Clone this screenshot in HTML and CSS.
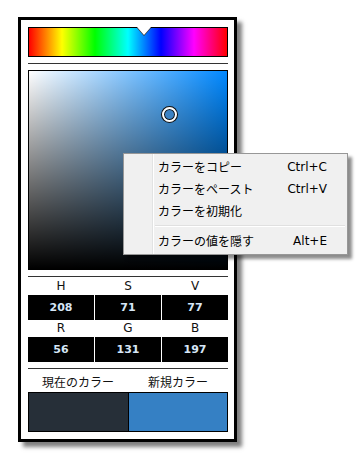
FILE: index.html
```html
<html>

<head>
    <meta charset="utf-8" />
    <link rel="stylesheet" href="styles.css">
</head>

<body>
    <div class="panel">
        <div class="hue-bar">
            <div class="hue-marker"></div>
        </div>
        <div class="divider"></div>
        <div class="sv-box">
            <div class="sv-white"></div>
            <div class="sv-black"></div>
            <div class="sv-cursor"></div>
        </div>
        <div class="divider"></div>
        <div class="values">
            <div class="label">H</div>
            <div class="label">S</div>
            <div class="label">V</div>
            <div class="value">208</div>
            <div class="value">71</div>
            <div class="value">77</div>
            <div class="label">R</div>
            <div class="label">G</div>
            <div class="label">B</div>
            <div class="value">56</div>
            <div class="value">131</div>
            <div class="value">197</div>
        </div>
        <div class="divider"></div>
        <div class="swatch-labels">
            <div class="label">現在のカラー</div>
            <div class="label">新規カラー</div>
        </div>
        <div class="swatches">
            <div class="swatch current"></div>
            <div class="swatch new"></div>
        </div>
    </div>

    <div class="menu">
        <div class="menu-item">
            <span class="menu-text">カラーをコピー</span>
            <span class="menu-key">Ctrl+C</span>
        </div>
        <div class="menu-item">
            <span class="menu-text">カラーをペースト</span>
            <span class="menu-key">Ctrl+V</span>
        </div>
        <div class="menu-item">
            <span class="menu-text">カラーを初期化</span>
            <span class="menu-key"></span>
        </div>
        <div class="menu-sep"></div>
        <div class="menu-item">
            <span class="menu-text">カラーの値を隠す</span>
            <span class="menu-key">Alt+E</span>
        </div>
    </div>
</body>

</html>
```

FILE: styles.css
```css
body {
    margin: 0;
    background: #fff;
    font-family: "Noto Sans CJK JP", "Noto Sans", sans-serif;
    font-size: 12px;
    color: #000;
}

.panel {
    width: 200px;
    margin: 17px 0 0 18px;
    padding: 7px 6px 7px 7px;
    border: 3px solid #000;
    background: #fff;
    box-shadow: 5px 5px 4px rgba(0, 0, 0, 0.5);
}

.hue-bar {
    position: relative;
    height: 28px;
    border: 1px solid #000;
    background: linear-gradient(to right, #f00, #ff0, #0f0, #0ff, #00f, #f0f, #f00);
}

.hue-marker {
    position: absolute;
    top: -1px;
    left: 108px;
    width: 0;
    height: 0;
    border-left: 7px solid transparent;
    border-right: 7px solid transparent;
    border-top: 8px solid #fff;
    filter: drop-shadow(0 1px 0 #333);
}

.divider {
    height: 1px;
    background: #333;
    margin: 6px 0;
}

.sv-box {
    position: relative;
    height: 198px;
    border: 1px solid #000;
    background: #0088ff;
}

.sv-white {
    position: absolute;
    inset: 0;
    background: linear-gradient(to right, #fff, rgba(255, 255, 255, 0));
}

.sv-black {
    position: absolute;
    inset: 0;
    background: linear-gradient(to bottom, rgba(0, 0, 0, 0), #000);
}

.sv-cursor {
    position: absolute;
    left: 133px;
    top: 36px;
    width: 11px;
    height: 11px;
    border: 2px solid #fff;
    border-radius: 50%;
    box-shadow: 0 0 0 1px #111, inset 0 0 0 1px #111;
    background: #3b82c4;
}

.values {
    display: grid;
    grid-template-columns: 66px 66px 66px;
    column-gap: 1px;
    margin-top: -5px;
}

.label {
    height: 17px;
    line-height: 17px;
    text-align: center;
    color: #111;
    font-family: "DejaVu Sans", "Noto Sans CJK JP", sans-serif;
}

.value {
    height: 25px;
    line-height: 25px;
    text-align: center;
    background: #000;
    color: #d6e6f6;
    font-family: "DejaVu Sans", sans-serif;
    font-weight: bold;
    font-size: 11px;
}

.swatch-labels {
    display: flex;
    margin-top: -3px;
}

.swatch-labels .label {
    flex: 1;
    height: 20px;
    line-height: 20px;
    font-family: "Noto Sans CJK JP", sans-serif;
}

.swatches {
    display: flex;
    height: 38px;
    border: 1px solid #000;
}

.swatch {
    flex: 1;
}

.swatch.current {
    background: #262f38;
    border-right: 1px solid #000;
}

.swatch.new {
    background: #3580c4;
}

.menu {
    position: absolute;
    left: 123px;
    top: 153px;
    width: 223px;
    padding: 2px 0;
    border: 1px solid #979797;
    background: #f0f0f0 linear-gradient(to right, #f0f0f0 28px, #e2e3e3 28px, #e2e3e3 29px, #fff 29px, #fff 30px, #f0f0f0 30px);
    box-shadow: 4px 4px 3px rgba(0, 0, 0, 0.45);
}

.menu-item {
    display: flex;
    justify-content: space-between;
    height: 22px;
    line-height: 22px;
    padding: 0 20px 0 34px;
    color: #000;
}

.menu-key {
    font-family: "DejaVu Sans", sans-serif;
}

.menu-sep {
    height: 1px;
    margin: 3px 2px 3px 31px;
    background: #e0e0e0;
    border-bottom: 1px solid #fff;
}
```
